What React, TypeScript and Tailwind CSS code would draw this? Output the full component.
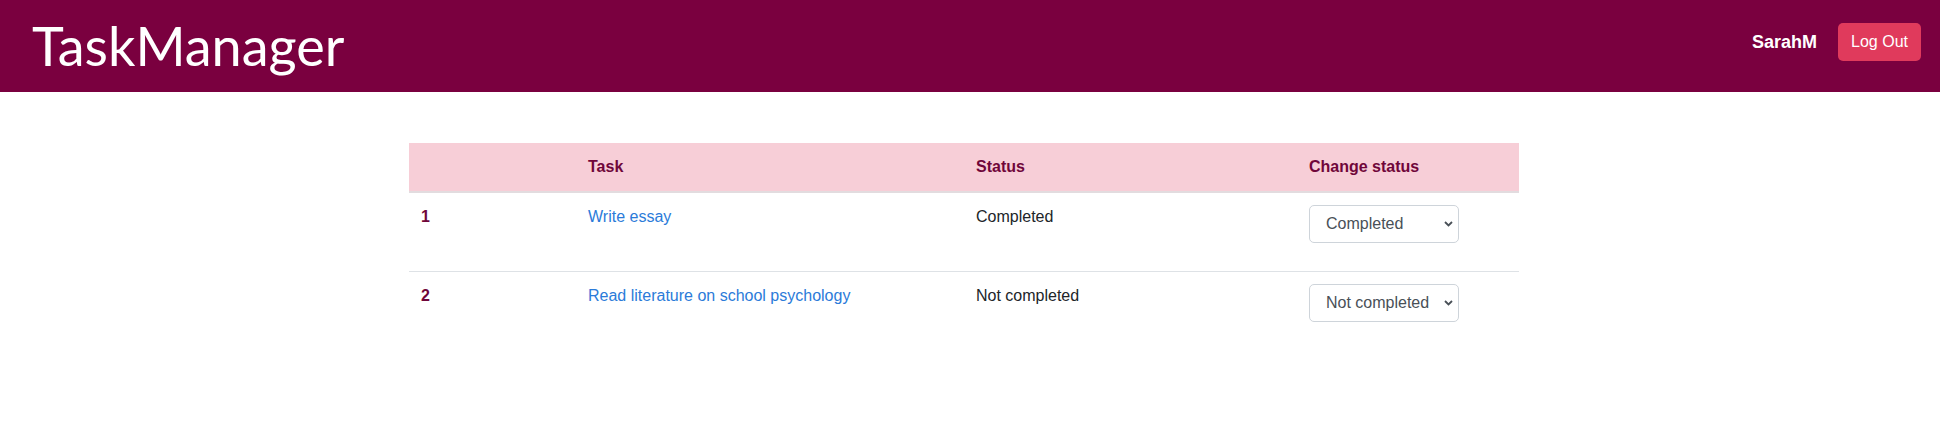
import { useState } from 'react'

type Task = {
  id: number
  title: string
  completed: boolean
}

const initialTasks: Task[] = [
  { id: 1, title: 'Write essay', completed: true },
  { id: 2, title: 'Read literature on school psychology', completed: false },
]

function Navbar() {
  return (
    <header className="flex h-[92px] items-center justify-between bg-[#7a003f] pl-8 pr-[19px]">
      <a href="#" className="font-['Lato',sans-serif] text-[54px] font-normal leading-none text-white">
        TaskManager
      </a>
      <div className="mb-2 flex items-center gap-[21px]">
        <span className="text-[18px] font-bold text-white">SarahM</span>
        <button className="h-[38px] rounded-[5px] bg-[#e03a5c] px-[13px] text-[16px] leading-6 text-white">
          Log Out
        </button>
      </div>
    </header>
  )
}

function StatusSelect({ value, onChange }: { value: boolean; onChange: (v: boolean) => void }) {
  return (
    <div className="relative mb-4 w-[150px]">
      <select
        value={value ? 'completed' : 'not'}
        onChange={(e) => onChange(e.target.value === 'completed')}
        className="h-[38px] w-full appearance-none rounded-[5px] border border-[#ced4da] bg-white pl-4 pr-6 text-[16px] text-[#495057]"
      >
        <option value="completed">Completed</option>
        <option value="not">Not completed</option>
      </select>
      <svg
        className="pointer-events-none absolute right-[6px] top-[16px]"
        width="9"
        height="6"
        viewBox="0 0 9 6"
        fill="none"
      >
        <path d="M1 1l3.5 3.5L8 1" stroke="#495057" strokeWidth="1.8" />
      </svg>
    </div>
  )
}

export default function App() {
  const [tasks, setTasks] = useState(initialTasks)

  const setStatus = (id: number, completed: boolean) =>
    setTasks((prev) => prev.map((t) => (t.id === id ? { ...t, completed } : t)))

  return (
    <div className="min-h-[425px] bg-white font-['Liberation_Sans',Arial,sans-serif] text-[16px] leading-6 text-[#212529]">
      <Navbar />
      <main className="ml-[409px] mt-[51px] w-[1110px]">
        <table className="w-full border-collapse text-left">
          <thead>
            <tr className="border-b-2 border-[#e2dcdf] bg-[#f7ced7] text-[#70063a]">
              <th className="w-[167px] p-3 font-bold"></th>
              <th className="w-[388px] p-3 font-bold">Task</th>
              <th className="w-[333px] p-3 font-bold">Status</th>
              <th className="p-3 font-bold">Change status</th>
            </tr>
          </thead>
          <tbody>
            {tasks.map((task, i) => (
              <tr key={task.id} className={i < tasks.length - 1 ? 'border-b border-[#dee2e6]' : ''}>
                <td className="p-3 align-top font-bold text-[#70063a]">{task.id}</td>
                <td className="p-3 align-top">
                  <a href="#" className="text-[#2b7bd9]">
                    {task.title}
                  </a>
                </td>
                <td className="p-3 align-top">{task.completed ? 'Completed' : 'Not completed'}</td>
                <td className="p-3 align-top">
                  <StatusSelect value={task.completed} onChange={(v) => setStatus(task.id, v)} />
                </td>
              </tr>
            ))}
          </tbody>
        </table>
      </main>
    </div>
  )
}
